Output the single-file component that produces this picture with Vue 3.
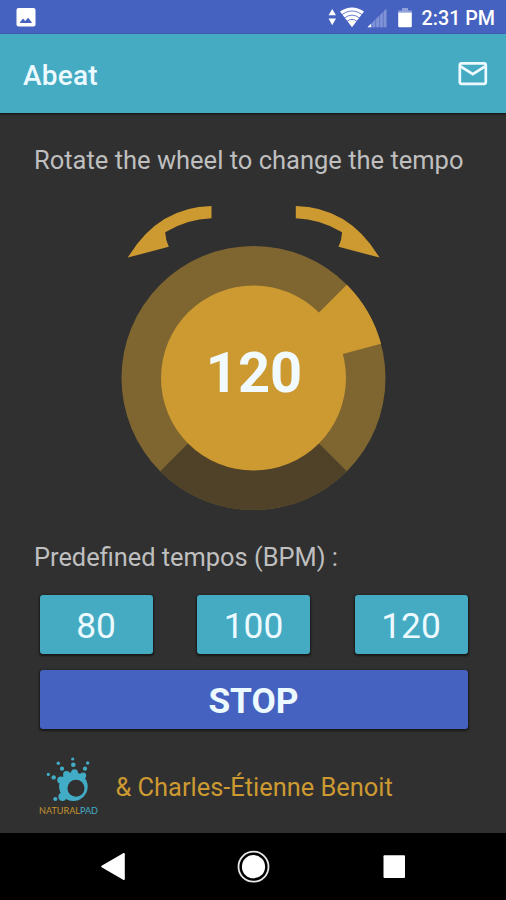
<script setup>
import { ref } from 'vue'

const tempo = ref(120)
const presets = [80, 100, 120]

const sparks = [
  [72.7, 759, 1.6], [73.3, 764.8, 2.3],
  [58.3, 763.3, 1.7], [62, 768.7, 2.1],
  [48.3, 774.4, 1.6], [53.7, 777.4, 2.2],
  [87.7, 763, 1.7], [85, 768.7, 2.1],
  [55.3, 799, 2.1],
]
const knobs = [
  [60.8, 780, 3.6], [66.5, 774.5, 3.4], [74.5, 772.6, 3.4], [83, 775.6, 3.2], [62.5, 796.8, 4.2],
]
</script>

<template>
  <div class="screen">
    <header class="status">
      <svg class="picture" width="20" height="20" viewBox="0 0 20 20">
        <rect x="0.5" y="1" width="19" height="18.5" rx="2" fill="#fff" />
        <path d="M3.5 16 L7 11.6 L9.2 14 L12.2 10.8 L16.2 16Z" fill="#4662c0" />
      </svg>
      <svg class="signals" width="90" height="34" viewBox="326 0 90 34">
        <path d="M332.2 9 L336 15.3 H328.6Z M332.2 25.2 L336 18.5 H328.6Z" fill="#fff" />
        <path d="M340 11.6 Q352 3.4 364 11.6 L352 27.2Z" fill="#fff" />
        <g fill="none" stroke="#4662c0" stroke-width="0.8">
          <path d="M341.5 14.8 Q352 7 362.5 14.8" />
          <path d="M344 18.2 Q352 12 360 18.2" />
          <path d="M346.6 21.6 Q352 17.2 357.4 21.6" />
        </g>
        <path d="M367.5 27.2 L386.5 8.5 V27.2Z" fill="#8093d6" />
        <path d="M367.5 27.2 L371.3 23.4 V27.2Z" fill="#fff" />
        <path d="M371.8 9V27 M375.7 9V27 M379.6 9V27 M383.2 9V27" stroke="#4662c0" stroke-width="0.6" />
        <path d="M398.2 12.5 V10.4 H402 V8 H408 V10.4 H411.8 V12.5Z" fill="#8fa0db" />
        <path d="M398.2 12.5 H411.8 V26 Q411.8 27.2 410.6 27.2 H399.4 Q398.2 27.2 398.2 26Z" fill="#fff" />
      </svg>
      <span class="clock">2:31 PM</span>
    </header>

    <div class="appbar">
      <h1>Abeat</h1>
      <svg width="30" height="24" viewBox="0 0 30 24">
        <rect x="1.8" y="1.4" width="26" height="20.4" rx="1.8" fill="none" stroke="#ecfaff" stroke-width="2.7" />
        <path d="M2.5 4.4 L14.8 12.2 L27.1 4.4" fill="none" stroke="#ecfaff" stroke-width="2.8" />
      </svg>
    </div>

    <main>
      <p class="hint">Rotate the wheel to change the tempo</p>
      <svg class="wheel" width="286" height="320" viewBox="110 200 286 320">
        <g fill="#cc9a31">
          <path d="M211.5 206 V218.2 Q187 219 165.2 232.2 Q165.5 240 168.8 246.7 L127.8 257.6 Q158 207 211.5 206Z" />
          <path d="M295.8 206 V218.2 Q320.3 219 342.1 232.2 Q341.8 240 338.5 246.7 L379.5 257.6 Q349.3 207 295.8 206Z" />
        </g>
        <circle cx="253.5" cy="378" r="132" fill="#7f6630" />
        <path d="M253.5 378 L346.84 471.34 A132 132 0 0 1 160.16 471.34Z" fill="#504228" />
        <path d="M253.5 378 L346.84 284.66 A132 132 0 0 1 381 343.84Z" fill="#cc9a31" />
        <circle cx="253.5" cy="378" r="92.5" fill="#cc9a31" />
        <text x="254" y="392.3" text-anchor="middle" class="tempo">{{ tempo }}</text>
      </svg>
      <p class="label">Predefined tempos (BPM) :</p>
      <div class="presets">
        <button v-for="p in presets" :key="p" @click="tempo = p">{{ p }}</button>
      </div>
      <button class="stop">STOP</button>
      <footer>
        <svg width="62" height="64" viewBox="38 754 62 64">
          <g fill="#42acc6">
            <circle v-for="(s, i) in sparks" :key="i" :cx="s[0]" :cy="s[1]" :r="s[2]" />
            <circle v-for="(k, i) in knobs" :key="'k' + i" :cx="k[0]" :cy="k[1]" :r="k[2]" />
            <circle cx="73.4" cy="786.6" r="14.3" />
          </g>
          <circle cx="76" cy="788.3" r="8.5" fill="#303030" />
          <text x="39" y="813.8" class="brand" textLength="59" lengthAdjust="spacingAndGlyphs">NATURAL<tspan class="pad">PAD</tspan></text>
        </svg>
        <span>&amp; Charles-Étienne Benoit</span>
      </footer>
    </main>

    <nav>
      <svg width="506" height="67" viewBox="0 833 506 67">
        <path d="M102 866.5 L124 853.8 V879.2Z" fill="#fff" stroke="#fff" stroke-width="1.6" stroke-linejoin="round" />
        <circle cx="253.5" cy="866.7" r="15" fill="none" stroke="#e8e8e8" stroke-width="1.8" />
        <circle cx="253.5" cy="866.7" r="11.6" fill="#fff" />
        <rect x="383.5" y="855.3" width="21.5" height="22.7" rx="1" fill="#fff" />
      </svg>
    </nav>
  </div>
</template>

<style>
body { background: #303030; }
</style>

<style scoped>
.screen {
  width: 506px;
  height: 900px;
  display: flex;
  flex-direction: column;
  background: #303030;
  font-family: Roboto, "Liberation Sans", sans-serif;
  overflow: hidden;
}
.status {
  height: 34px;
  display: flex;
  align-items: center;
  background: #4662c0;
  padding: 0 11px 0 16px;
}
.signals { margin-left: auto; }
.clock {
  margin-left: 6px;
  color: #fff;
  font-size: 19.7px;
  font-weight: 500;
  line-height: 34px;
  padding-top: 3px;
  white-space: nowrap;
}
.appbar {
  height: 79px;
  box-sizing: border-box;
  display: flex;
  align-items: center;
  justify-content: space-between;
  padding: 1px 18px 0 23px;
  background: #44abc3;
  box-shadow: 0 1px 2px #111;
}
h1 {
  margin: 0;
  color: #ecfaff;
  font-size: 28px;
  font-weight: 500;
  letter-spacing: 0.2px;
  padding-top: 2px;
}
main { flex: 1; display: flex; flex-direction: column; }
p {
  margin: 0;
  color: #bfbfbf;
  font-size: 25.5px;
  line-height: 32px;
  padding-left: 34px;
  white-space: nowrap;
}
.hint { padding-top: 31px; }
.wheel { margin: 24px 0 0 110px; }
.tempo { fill: #f0faff; font-size: 56px; font-weight: 700; }
.label { padding-top: 21px; font-size: 25.4px; }
.presets {
  display: flex;
  justify-content: space-between;
  margin: 22px 38.5px 0 39.5px;
}
button {
  border: 0;
  padding: 3px 0 0;
  border-radius: 3px;
  height: 59px;
  font-family: inherit;
  color: #ecfaff;
  box-shadow: 0 1px 2px 0.5px #1b1818;
}
.presets button { width: 113px; font-size: 35.3px; background: #44abc3; }
.stop {
  margin: 16px 38.5px 0 39.5px;
  background: #4662c0;
  font-size: 35.3px;
  font-weight: 700;
}
footer {
  display: flex;
  align-items: center;
  padding: 25px 0 0 38px;
  gap: 15.5px;
  color: #cc9a31;
  font-size: 25.4px;
  white-space: nowrap;
}
footer span { padding-top: 2px; }
.brand { font-family: Lato, sans-serif; font-size: 9.6px; fill: #c4932f; }
.pad { fill: #42acc6; }
nav { height: 67px; background: #000; }
svg { display: block; flex: none; }
</style>
